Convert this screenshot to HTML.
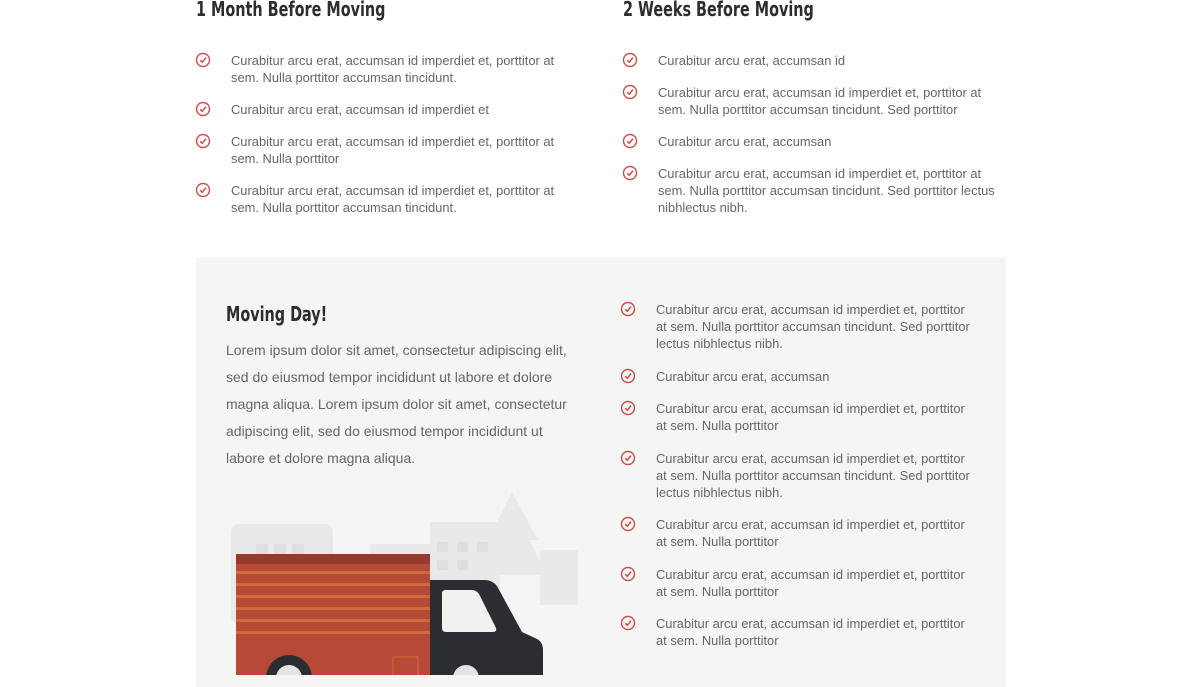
<!DOCTYPE html>
<html><head><meta charset="utf-8"><style>
*{margin:0;padding:0;box-sizing:border-box}
body{width:1200px;height:675px;overflow:hidden;background:#fff;font-family:"Liberation Sans",sans-serif;position:relative}
.h{position:absolute;font-family:"DejaVu Sans Condensed","Liberation Sans Narrow","Liberation Sans",sans-serif;font-weight:bold;font-size:20px;color:#2d2d2d;transform:scaleX(0.8);transform-origin:left}
.it{position:absolute;font-size:12.9px;line-height:17px;color:#666;white-space:nowrap}
.ck{position:absolute;width:16px;height:16px}
.panel{position:absolute;left:196px;top:257px;width:810px;height:430px;background:#f5f5f5}
.p{position:absolute;left:226px;top:337px;font-size:14px;line-height:27px;color:#666;white-space:nowrap}
</style></head><body>
<div class="panel"></div>
<div class="h" style="left:196px;top:-3px">1 Month Before Moving</div>
<div class="h" style="left:623px;top:-3px">2 Weeks Before Moving</div>
<div class="h" style="left:226px;top:302px">Moving Day!</div>
<div class="p">Lorem ipsum dolor sit amet, consectetur adipiscing elit,<br>sed do eiusmod tempor incididunt ut labore et dolore<br>magna aliqua. Lorem ipsum dolor sit amet, consectetur<br>adipiscing elit, sed do eiusmod tempor incididunt ut<br>labore et dolore magna aliqua.</div>

<svg width="0" height="0" style="position:absolute"><defs><g id="c"><circle cx="8" cy="8" r="6.5" fill="none" stroke="#c9504a" stroke-width="1.4"/><path d="M5.2 8.2 L7.3 10.3 L11 5.6" fill="none" stroke="#c9504a" stroke-width="1.5"/></g></defs></svg>

<svg class="ck" style="left:195px;top:52px"><use href="#c"/></svg>
<div class="it" style="left:231px;top:52px">Curabitur arcu erat, accumsan id imperdiet et, porttitor at<br>sem. Nulla porttitor accumsan tincidunt.</div>
<svg class="ck" style="left:195px;top:101px"><use href="#c"/></svg>
<div class="it" style="left:231px;top:101px">Curabitur arcu erat, accumsan id imperdiet et</div>
<svg class="ck" style="left:195px;top:133px"><use href="#c"/></svg>
<div class="it" style="left:231px;top:133px">Curabitur arcu erat, accumsan id imperdiet et, porttitor at<br>sem. Nulla porttitor</div>
<svg class="ck" style="left:195px;top:182px"><use href="#c"/></svg>
<div class="it" style="left:231px;top:182px">Curabitur arcu erat, accumsan id imperdiet et, porttitor at<br>sem. Nulla porttitor accumsan tincidunt.</div>

<svg class="ck" style="left:622px;top:52px"><use href="#c"/></svg>
<div class="it" style="left:658px;top:52px">Curabitur arcu erat, accumsan id</div>
<svg class="ck" style="left:622px;top:84px"><use href="#c"/></svg>
<div class="it" style="left:658px;top:84px">Curabitur arcu erat, accumsan id imperdiet et, porttitor at<br>sem. Nulla porttitor accumsan tincidunt. Sed porttitor</div>
<svg class="ck" style="left:622px;top:133px"><use href="#c"/></svg>
<div class="it" style="left:658px;top:133px">Curabitur arcu erat, accumsan</div>
<svg class="ck" style="left:622px;top:165px"><use href="#c"/></svg>
<div class="it" style="left:658px;top:165px">Curabitur arcu erat, accumsan id imperdiet et, porttitor at<br>sem. Nulla porttitor accumsan tincidunt. Sed porttitor lectus<br>nibhlectus nibh.</div>

<svg class="ck" style="left:620px;top:301px"><use href="#c"/></svg>
<div class="it" style="left:656px;top:301px">Curabitur arcu erat, accumsan id imperdiet et, porttitor<br>at sem. Nulla porttitor accumsan tincidunt. Sed porttitor<br>lectus nibhlectus nibh.</div>
<svg class="ck" style="left:620px;top:368px"><use href="#c"/></svg>
<div class="it" style="left:656px;top:368px">Curabitur arcu erat, accumsan</div>
<svg class="ck" style="left:620px;top:400px"><use href="#c"/></svg>
<div class="it" style="left:656px;top:400px">Curabitur arcu erat, accumsan id imperdiet et, porttitor<br>at sem. Nulla porttitor</div>
<svg class="ck" style="left:620px;top:450px"><use href="#c"/></svg>
<div class="it" style="left:656px;top:450px">Curabitur arcu erat, accumsan id imperdiet et, porttitor<br>at sem. Nulla porttitor accumsan tincidunt. Sed porttitor<br>lectus nibhlectus nibh.</div>
<svg class="ck" style="left:620px;top:516px"><use href="#c"/></svg>
<div class="it" style="left:656px;top:516px">Curabitur arcu erat, accumsan id imperdiet et, porttitor<br>at sem. Nulla porttitor</div>
<svg class="ck" style="left:620px;top:566px"><use href="#c"/></svg>
<div class="it" style="left:656px;top:566px">Curabitur arcu erat, accumsan id imperdiet et, porttitor<br>at sem. Nulla porttitor</div>
<svg class="ck" style="left:620px;top:615px"><use href="#c"/></svg>
<div class="it" style="left:656px;top:615px">Curabitur arcu erat, accumsan id imperdiet et, porttitor<br>at sem. Nulla porttitor</div>

<svg style="position:absolute;left:0;top:0" width="1200" height="675">
 <g fill="#e9e9ea">
  <rect x="231" y="524" width="102" height="100" rx="8"/>
  <rect x="370" y="544" width="70" height="80"/>
  <rect x="430" y="522" width="70" height="100"/>
  <polygon points="512,492 488,540 496,540 478,575 546,575 530,540 538,540"/>
  <rect x="540" y="550" width="38" height="55"/>
 </g>
 <g fill="#dedee0">
  <rect x="256" y="544" width="12" height="10"/><rect x="274" y="544" width="12" height="10"/><rect x="292" y="544" width="12" height="10"/>
  <rect x="437" y="542" width="11" height="10"/><rect x="457" y="542" width="11" height="10"/><rect x="477" y="542" width="11" height="10"/>
  <rect x="437" y="560" width="11" height="10"/><rect x="457" y="560" width="11" height="10"/>
 </g>
 <rect x="236" y="554" width="194" height="130" fill="#b74a36"/>
 <rect x="236" y="554" width="194" height="10" fill="#963a30"/>
 <g fill="#cf6a3e">
  <rect x="236" y="571" width="194" height="3"/><rect x="236" y="583" width="194" height="3"/>
  <rect x="236" y="595" width="194" height="3"/><rect x="236" y="607" width="194" height="3"/>
  <rect x="236" y="619" width="194" height="3"/><rect x="236" y="631" width="194" height="3"/>
 </g>
 <rect x="393" y="657" width="25" height="22" fill="none" stroke="#cf6a3e" stroke-width="1"/>
 <path d="M430 580 H485 Q492 580 497 586 L522 632 L535 638 Q543 641 543 650 V680 H430 Z" fill="#2c2d30"/>
 <path d="M442 593 Q442 590 446 590 H472 Q476 590 479 594 L496 628 Q497 632 493 632 H446 Q442 632 442 628 Z" fill="#f1f1f1"/>
 <circle cx="289" cy="678" r="23" fill="#2c2d30"/><circle cx="289" cy="678" r="13" fill="#e4e4e4"/>
 <circle cx="466" cy="678" r="23" fill="#2c2d30"/><circle cx="466" cy="678" r="13" fill="#e4e4e4"/>
</svg>
</body></html>
